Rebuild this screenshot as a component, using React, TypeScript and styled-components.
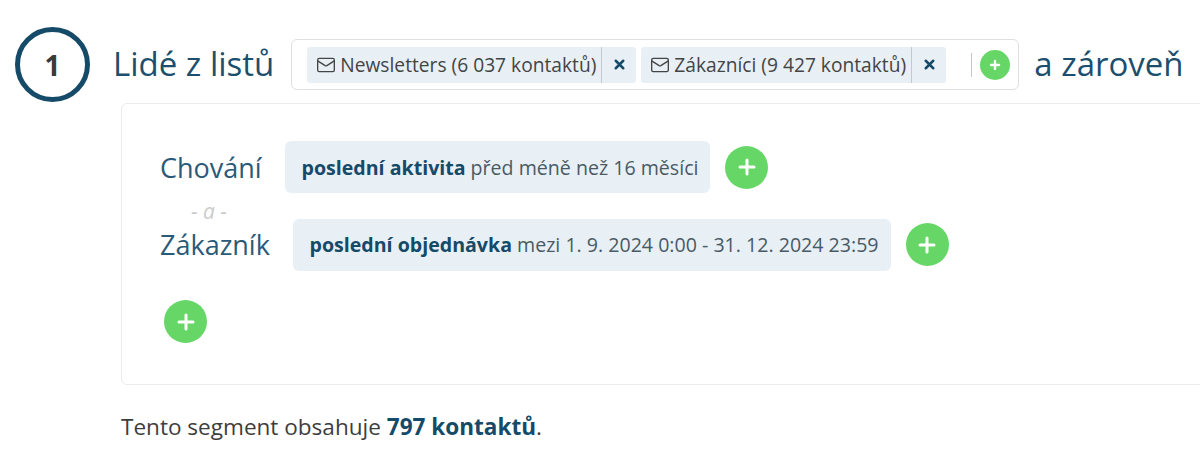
import React from 'react';
import styled, { createGlobalStyle } from 'styled-components';
import { Mail, X, Plus } from 'lucide-react';

const GlobalStyle = createGlobalStyle`
  html, body {
    margin: 0;
    background: #fff;
    overflow: hidden;
  }
  * {
    box-sizing: border-box;
  }
`;

const Page = styled.div`
  width: 1200px;
  height: 464px;
  overflow: hidden;
  padding: 27px 0 0 15px;
  font-family: 'Open Sans', sans-serif;
  color: #3d3d3d;
`;

const StepRow = styled.div`
  display: flex;
  align-items: center;
  height: 75px;
`;

const StepCircle = styled.div`
  width: 75px;
  height: 75px;
  flex: none;
  border: 5px solid #154a68;
  border-radius: 50%;
  display: flex;
  align-items: center;
  justify-content: center;
  font-size: 28px;
  font-weight: 700;
  color: #3a3a3a;
  margin-right: 23px;
`;

const Heading = styled.span`
  font-size: 33px;
  line-height: 44px;
  margin-top: -2px;
  color: #1c4f6d;
  white-space: nowrap;
`;

const ListBox = styled.div`
  width: 728px;
  height: 51px;
  margin: 0 15px 0 17px;
  flex: none;
  border: 1px solid #dfdfdf;
  border-radius: 6px;
  padding: 0 8px 0 15px;
  display: flex;
  align-items: center;
  gap: 5px;
`;

const Tag = styled.div`
  height: 36px;
  display: flex;
  align-items: center;
  background: #e8f0f6;
  border-radius: 3px;
  font-size: 19.2px;
  color: #444;
  white-space: nowrap;
`;

const TagLabel = styled.span`
  display: flex;
  align-items: center;
  gap: 4px;
  padding: 0 5px 0 9px;
`;

const TagClose = styled.span`
  width: 35px;
  height: 36px;
  display: flex;
  align-items: center;
  justify-content: center;
  border-left: 1px solid #c4c9cc;
  color: #154a68;
`;

const BoxDivider = styled.span`
  width: 1px;
  height: 24px;
  background: #c9c9c9;
  margin-left: auto;
  margin-right: 3px;
`;

const AddButton = styled.span<{ $size: number }>`
  width: ${(p) => p.$size}px;
  height: ${(p) => p.$size}px;
  flex: none;
  border-radius: 50%;
  background: #66d766;
  color: #fff;
  display: flex;
  align-items: center;
  justify-content: center;
`;

const Card = styled.div`
  width: 1200px;
  height: 282px;
  margin: 1px 0 0 106px;
  border: 1px solid #ececec;
  border-radius: 6px;
  padding: 37px 0 0 38px;
`;

const ConditionRow = styled.div`
  display: flex;
  align-items: center;
  height: 52px;
`;

const ConditionLabel = styled.span<{ $width: number }>`
  width: ${(p) => p.$width}px;
  flex: none;
  font-size: 27px;
  color: #2a5a78;
`;

const Condition = styled.div`
  height: 52px;
  display: flex;
  align-items: center;
  padding: 0 12px 0 16.5px;
  margin-right: 15px;
  background: #e8f0f6;
  border-radius: 6px;
  font-size: 19.6px;
  color: #4a5a64;
  white-space: nowrap;
`;

const ConditionName = styled.strong`
  font-weight: 700;
  color: #154a68;
  margin-right: 5px;
`;

const AndSeparator = styled.div`
  height: 25.5px;
  padding-left: 31px;
  font-size: 21px;
  font-style: italic;
  line-height: 37px;
  color: #cccccc;
`;

const CardFooter = styled.div`
  margin-top: 29.5px;
  padding-left: 4px;
`;

const Summary = styled.p`
  margin: 27px 0 0 106px;
  font-size: 22.55px;
  line-height: 30px;
  color: #3d3d3d;
`;

const SummaryCount = styled.strong`
  font-weight: 700;
  color: #154a68;
`;

const lists = ['Newsletters (6 037 kontaktů)', 'Zákazníci (9 427 kontaktů)'];

export default function App() {
  return (
    <Page>
      <GlobalStyle />
      <StepRow>
        <StepCircle>1</StepCircle>
        <Heading>Lidé z listů</Heading>
        <ListBox>
          {lists.map((list) => (
            <Tag key={list}>
              <TagLabel>
                <Mail size={20} strokeWidth={1.6} />
                {list}
              </TagLabel>
              <TagClose>
                <X size={15} strokeWidth={4} />
              </TagClose>
            </Tag>
          ))}
          <BoxDivider />
          <AddButton $size={30}>
            <Plus size={14} strokeWidth={4} />
          </AddButton>
        </ListBox>
        <Heading>a zároveň</Heading>
      </StepRow>
      <Card>
        <ConditionRow>
          <ConditionLabel $width={125}>Chování</ConditionLabel>
          <Condition>
            <ConditionName>poslední aktivita</ConditionName>
            před méně než 16 měsíci
          </Condition>
          <AddButton $size={43}>
            <Plus size={24} strokeWidth={3} />
          </AddButton>
        </ConditionRow>
        <AndSeparator>- a -</AndSeparator>
        <ConditionRow>
          <ConditionLabel $width={133}>Zákazník</ConditionLabel>
          <Condition>
            <ConditionName>poslední objednávka</ConditionName>
            mezi 1. 9. 2024 0:00 - 31. 12. 2024 23:59
          </Condition>
          <AddButton $size={43}>
            <Plus size={24} strokeWidth={3} />
          </AddButton>
        </ConditionRow>
        <CardFooter>
          <AddButton $size={43}>
            <Plus size={24} strokeWidth={3} />
          </AddButton>
        </CardFooter>
      </Card>
      <Summary>
        Tento segment obsahuje <SummaryCount>797 kontaktů</SummaryCount>.
      </Summary>
    </Page>
  );
}
